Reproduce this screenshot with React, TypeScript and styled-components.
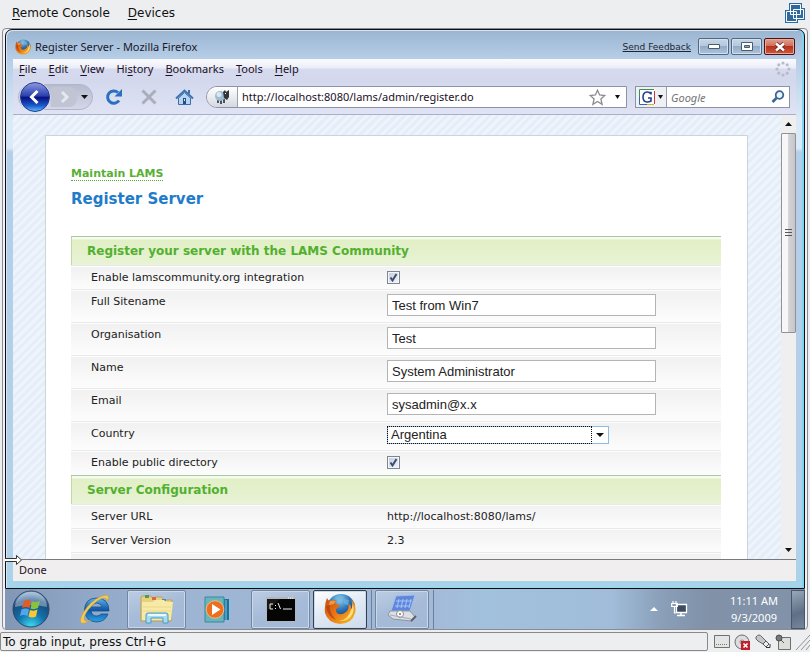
import React from "react";
import styled, { createGlobalStyle } from "styled-components";

const UI = '"Noto Sans", "Open Sans", sans-serif';
const DEJAVU = '"DejaVu Sans", sans-serif';

const Global = createGlobalStyle`
  * { box-sizing: border-box; }
  html, body { margin: 0; padding: 0; }
  body { background: #eceef0; color: #111; font-family: ${DEJAVU}; font-size: 12px; }
  button, input, select { font: inherit; color: inherit; margin: 0; padding: 0; border: 0; background: none; border-radius: 0; outline: none; }
  svg { display: block; flex: none; }
  u { text-underline-offset: 2px; }
`;

const Console = styled.div`
  display: flex;
  flex-direction: column;
  height: 100vh;
  min-height: 420px;
  overflow: hidden;
`;

const ConsoleMenu = styled.nav`
  display: flex;
  align-items: center;
  gap: 18px;
  flex: none;
  height: 28px;
  padding: 0 5px 2px 12px;
`;

const ConsoleItem = styled.button`
  font-size: 12px;
  line-height: 16px;
`;

const UnityButton = styled.button`
  margin-left: auto;
`;

const Screen = styled.main`
  display: flex;
  flex-direction: column;
  flex: 1;
  min-height: 0;
  margin: 0 2px 0 2px;
  padding: 0 2px;
  border: 1px solid #8c8c90;
  border-radius: 4px;
  background: #f2f0f4;
`;

const Window = styled.section`
  display: flex;
  flex-direction: column;
  flex: 1;
  min-height: 0;
  padding: 0 8px 7px 7px;
  border: 1px solid #0a0e14;
  border-radius: 7px 7px 0 0;
  background: linear-gradient(#9bb4d1 0, #b5cde6 28px, #dbeaf8 90px, #dbeaf8 118px, #b3cfe9 122px, #b5d0e9 92%, #a5d4ea);
  box-shadow: inset -2px 0 0 #7fd4ee, inset 1px 1px 0 #d5e5f2, inset 0 -2px 0 #9fd6ea;
`;

const TitleBar = styled.header`
  display: flex;
  align-items: center;
  flex: none;
  height: 29px;
  padding: 4px 3px 0 2px;
  gap: 4px;
  font-family: ${UI};
  font-size: 11px;
  color: #18182c;
`;

const Title = styled.h1`
  margin: 0;
  font: inherit;
  line-height: 16px;
`;

const Feedback = styled.a`
  margin-left: auto;
  margin-right: 3px;
  font-family: ${DEJAVU};
  font-size: 9px;
  color: #1d2630;
`;

const WinButton = styled.button<{ $close?: boolean }>`
  display: flex;
  align-items: center;
  justify-content: center;
  width: 31px;
  height: 17px;
  margin-right: -2px;
  border: 1px solid ${(p) => (p.$close ? "#4a1414" : "#53687f")};
  border-radius: 2px;
  background: ${(p) =>
    p.$close
      ? "linear-gradient(#e0a08f, #cf6c58 48%, #b8321c 50%, #cd5a3c)"
      : "linear-gradient(#c5d6e8, #b3c7dd 48%, #93abc6 50%, #adc4dc)"};
  box-shadow: inset 0 0 0 1px ${(p) => (p.$close ? "#e9a99b" : "#d3e1ef")};
`;

const MenuBar = styled.nav`
  display: flex;
  align-items: center;
  gap: 12px;
  flex: none;
  height: 21px;
  padding: 0 5px 2px 6px;
  background: linear-gradient(#fbfbfe, #eceef8 40%, #d5daee 50%, #d3d8ed);
  font-family: ${UI};
  font-size: 11px;
`;

const MenuItem = styled.button`
  line-height: 16px;
  color: #1c1026;
`;

const Throbber = styled.span`
  margin-left: auto;
`;

const Toolbar = styled.div`
  display: flex;
  align-items: center;
  flex: none;
  height: 35px;
  padding: 0 6px 0 5px;
  border-bottom: 1px solid #a9afc4;
  background: linear-gradient(#d3d8ed, #dfe3f4);
  font-family: ${UI};
  font-size: 11px;
`;

const NavPill = styled.div`
  display: flex;
  align-items: center;
  height: 26px;
  width: 75px;
  padding-right: 5px;
  border: 1px solid #b0b5c9;
  border-radius: 13px;
  background: linear-gradient(#b6bbcf, #d3d7e8);
`;

const IconButton = styled.button<{ $gap?: number }>`
  display: flex;
  align-items: center;
  justify-content: center;
  margin-left: ${(p) => p.$gap ?? 0}px;
`;

const AddressBox = styled.div`
  display: flex;
  align-items: center;
  flex: 1;
  height: 22px;
  margin-left: 12px;
  padding-right: 6px;
  border: 1px solid #8d93a6;
  border-radius: 12px 0 0 12px;
  background: #fff;
  overflow: hidden;
`;

const SiteIdentity = styled.button`
  display: flex;
  align-items: center;
  justify-content: center;
  width: 31px;
  height: 20px;
  border-right: 1px solid #9a9fb0;
  background: linear-gradient(#fff, #d6d8e0);
`;

const AddressInput = styled.input`
  flex: 1;
  min-width: 0;
  padding-left: 4px;
  line-height: 16px;
  color: #1c1026;
`;

const SearchBox = styled.div`
  display: flex;
  align-items: center;
  width: 155px;
  height: 22px;
  margin-left: 8px;
  padding-right: 4px;
  border: 1px solid #8d93a6;
  background: #fff;
`;

const Engine = styled.button`
  display: flex;
  align-items: center;
  gap: 3px;
  height: 20px;
  width: 31px;
  padding-left: 3px;
  border-right: 1px solid #9a9fb0;
  background: #eef0f4;
`;

const SearchInput = styled.input`
  flex: 1;
  min-width: 0;
  padding-left: 4px;
  font-style: italic;
  &::placeholder { color: #757575; opacity: 1; }
`;

const Viewport = styled.div`
  display: flex;
  flex: 1;
  min-height: 0;
  border-bottom: 1px solid #77797c;
`;

const Page = styled.div`
  flex: 1;
  min-width: 0;
  overflow: hidden;
  padding: 20px 33px 0 32px;
  background: repeating-linear-gradient(135deg, #e4edf8 0 3px, #eef4fb 3px 6px);
`;

const Card = styled.article`
  min-height: 100%;
  padding: 30px 26px 40px 25px;
  border: 1px solid #cbd3dc;
  background: #fff;
`;

const Crumb = styled.a`
  display: inline-block;
  border-bottom: 1px dotted #58a83c;
  font-size: 11px;
  font-weight: bold;
  line-height: 12px;
  color: #58b035;
  text-decoration: none;
`;

const Heading = styled.h2`
  margin: 8px 0 27px;
  font-size: 15px;
  line-height: 20px;
  color: #1f7cc9;
`;

const Settings = styled.table`
  width: 100%;
  border-collapse: collapse;
  table-layout: fixed;
  font-size: 11px;
  color: #222;
`;

const SectionHead = styled.th`
  height: 29px;
  padding: 0 0 1px 16px;
  border-top: 1px solid #a9c8a4;
  background: linear-gradient(#fff 0 1px, #e1efc6 2px, #e5f1cf 70%, #e9f4d8);
  box-shadow: inset 1px 0 0 #c3d6a9;
  font-size: 12px;
  line-height: 16px;
  text-align: left;
  color: #52b02f;
`;

const Row = styled.tr<{ $h: number }>`
  height: ${(p) => p.$h}px;
  background: linear-gradient(#f1f1f1, #fdfdfd);
  border-top: 1px solid #e9e9e9;
`;

const LabelCell = styled.th`
  padding: 5px 0 0 20px;
  font-weight: normal;
  line-height: 14px;
  text-align: left;
  vertical-align: top;
`;

const ValueCell = styled.td<{ $field?: boolean }>`
  padding: ${(p) => (p.$field ? 4 : 5)}px 0 0;
  line-height: 14px;
  vertical-align: top;
`;

const TextField = styled.input`
  display: block;
  width: 269px;
  height: 22px;
  padding: 1px 4px 0;
  border: 1px solid #b4b4b4;
  background: #fff;
  font-family: "Liberation Sans", sans-serif;
  font-size: 13px;
`;

const CheckField = styled.span`
  display: inline-grid;
  width: 13px;
  height: 13px;
  input {
    grid-area: 1 / 1;
    appearance: none;
    width: 13px;
    height: 13px;
    border: 1px solid #7d8794;
    background: linear-gradient(135deg, #c3cbd9, #f2f5f9);
    box-shadow: inset 0 0 0 1px #f4f6f8;
  }
  svg { grid-area: 1 / 1; pointer-events: none; visibility: hidden; }
  input:checked + svg { visibility: visible; }
`;

const SelectField = styled.span`
  display: flex;
  width: 222px;
  height: 18px;
  border: 1px solid #8fbbe0;
  background: #fff;
`;

const Select = styled.select`
  flex: 1;
  min-width: 0;
  margin: -1px 0 -1px -1px;
  padding-left: 3px;
  appearance: none;
  border: 1px dotted #111;
  font-family: "Liberation Sans", sans-serif;
  font-size: 13px;
  line-height: 16px;
`;

const SelectArrow = styled.span`
  display: flex;
  align-items: center;
  justify-content: center;
  width: 16px;
`;

const ScrollBar = styled.div`
  display: flex;
  flex-direction: column;
  flex: none;
  width: 15px;
  background: #f0eff0;
`;

const ScrollButton = styled.button`
  display: flex;
  align-items: center;
  justify-content: center;
  height: 18px;
`;

const ScrollThumb = styled.div`
  display: flex;
  align-items: center;
  justify-content: center;
  height: 45%;
  margin-bottom: auto;
  border: 1px solid #929294;
  border-radius: 1px;
  background: linear-gradient(90deg, #f7f7f7 0 45%, #d5d5d8 50%, #c6c6ca);
`;

const StatusBar = styled.footer`
  position: relative;
  flex: none;
  height: 21px;
  padding: 2px 6px;
  background: #f0eeee;
  font-family: ${UI};
  font-size: 11px;
  line-height: 16px;
  color: #1c1026;
`;

const Pointer = styled.span`
  position: absolute;
  left: -8px;
  top: -6px;
`;

const Taskbar = styled.nav`
  display: flex;
  align-items: center;
  flex: none;
  height: 40px;
  background: linear-gradient(90deg, #8297b6, #91a7c7 10%, #9eb4d3 22%, #a3b9d8 52%, #a2c1dd 60%, #a0bcd8 76%, #8a9fb9 82%, #8091a8 88%, #8192a9);
`;

const TaskButton = styled.button<{ $frame?: boolean; $active?: boolean; $w: number }>`
  display: flex;
  align-items: center;
  justify-content: center;
  width: ${(p) => p.$w}px;
  height: 39px;
  border: ${(p) => (p.$active ? "1px solid #33404f" : p.$frame ? "1px solid #7186a1" : "0")};
  border-radius: 2px;
  box-shadow: ${(p) => (p.$frame || p.$active ? "inset 0 0 0 1px #c9d8ea" : "none")};
  background: ${(p) =>
    p.$active
      ? "linear-gradient(160deg, #fff, #dfe8f3 50%, #cfdcec)"
      : p.$frame
        ? "linear-gradient(160deg, #bccde3, #a6bbd8 50%, #a3b8d5)"
        : "none"};
`;

const Launchers = styled.div`
  display: flex;
  gap: 6px;
`;

const RunningTasks = styled.div`
  display: flex;
  gap: 3px;
`;

const TaskStack = styled.div`
  display: flex;
  padding-right: 4px;
  border-right: 1px solid #6d809b;
`;

const Tray = styled.div`
  display: flex;
  align-items: center;
  gap: 13px;
  margin-left: auto;
`;

const Clock = styled.time`
  width: 74px;
  margin-left: 16px;
  font-family: ${UI};
  font-size: 11px;
  line-height: 17px;
  text-align: center;
  color: #fff;
`;

const ShowDesktop = styled.button`
  width: 14px;
  height: 39px;
  margin-left: -13px;
  border: 1px solid #46566b;
  background: linear-gradient(160deg, #98a7b9, #5e6f86 60%, #76879d);
`;

const ConsoleStatus = styled.footer`
  display: flex;
  align-items: center;
  gap: 4px;
  flex: none;
  height: 22px;
  padding-top: 1px;
`;

const Hint = styled.output`
  flex: 1;
  height: 19px;
  padding: 0 2px;
  margin-right: 2px;
  border: 1px solid #88898c;
  border-radius: 2px;
  font-size: 12px;
  line-height: 18px;
`;

const Caret = ({ up, fill = "#111", w = 7 }: { up?: boolean; fill?: string; w?: number }) => (
  <svg width={w} height="4" viewBox="0 0 8 4" preserveAspectRatio="none">
    <path d={up ? "M0 4L4 0L8 4Z" : "M0 0H8L4 4Z"} fill={fill} />
  </svg>
);

const Check = () => (
  <svg width="13" height="13">
    <path d="M3.5 6.5L5.5 9.5L9.5 3" fill="none" stroke="#3c4c78" strokeWidth="2" />
  </svg>
);

const FirefoxIcon = ({ size, id }: { size: number; id: string }) => (
  <svg width={size} height={size} viewBox="0 0 32 32">
    <defs>
      <radialGradient id={id + "g"} cx=".45" cy=".2" r=".8">
        <stop offset="0" stopColor="#8fd0f3" />
        <stop offset=".45" stopColor="#2f74b8" />
        <stop offset="1" stopColor="#0c2659" />
      </radialGradient>
      <linearGradient id={id + "f"} x1="0" y1="0" x2="1" y2="1">
        <stop offset="0" stopColor="#c94a12" />
        <stop offset=".5" stopColor="#ea7a16" />
        <stop offset="1" stopColor="#f5c02b" />
      </linearGradient>
    </defs>
    <circle cx="17" cy="15" r="14" fill={`url(#${id}g)`} />
    <path d="M11 4Q16 1 20 4L17 8L13 8ZM20 6L25 7L24 12L20 11Z" fill="#70b3dd" opacity=".7" />
    <path d="M3 5Q4 8 6 8Q9 6 13 8Q11 9 11 11L16 12Q16 14 13 15Q11 17 13 20Q17 23 22 19Q26 16 24 10Q28 13 27 17Q30 12 27 6Q33 12 31 20Q28 31 16 31Q4 30 1 20Q0 12 3 5Z" fill={`url(#${id}f)`} />
    <path d="M27 7Q31 13 29 20Q25 29 15 28Q24 27 27 17Q30 12 27 7Z" fill="#fbe07a" />
    <path d="M2 13Q3 23 12 27Q5 20 6 12Z" fill="#b23a10" opacity=".7" />
    <path d="M6 8Q9 7 12 8Q10 10 10 11L5 12Z" fill="#f19a3a" />
  </svg>
);

const UnityIcon = () => (
  <svg width="20" height="21" viewBox="0 0 20 21">
    <path d="M4 0H17V5H20V17H13V20H0V7H4Z" fill="#2d6b9f" />
    <g fill="none" stroke="#fff">
      <path d="M5.500 1.500H15.500V11.500H5.500Z" />
      <path d="M8.500 6.500H18.500V15.500H8.500Z" />
      <path d="M1.500 8.500H11.500V18.500H1.500Z" />
    </g>
  </svg>
);

const BackIcon = () => (
  <svg width="32" height="32" viewBox="0 0 32 32">
    <defs>
      <linearGradient id="bk" x1="0" y1="0" x2="0" y2="1">
        <stop offset="0" stopColor="#8d9be2" />
        <stop offset=".46" stopColor="#2b40ae" />
        <stop offset=".52" stopColor="#06127e" />
        <stop offset=".8" stopColor="#1d5bd0" />
        <stop offset="1" stopColor="#5ec4f8" />
      </linearGradient>
    </defs>
    <circle cx="16" cy="16" r="15.500" fill="#dfe5f5" />
    <circle cx="16" cy="16" r="14.500" fill="url(#bk)" stroke="#26388a" />
    <path d="M18.500 10L12.500 16L18.500 22" fill="none" stroke="#fff" strokeWidth="3" />
  </svg>
);

const ForwardIcon = () => (
  <svg width="26" height="20" viewBox="0 0 26 20">
    <path d="M0 0H19Q26 1 26 10Q26 19 19 20H0Z" fill="#c0c4d3" />
    <path d="M11 5L16 10L11 15" fill="none" stroke="#e6e8f0" strokeWidth="3" />
  </svg>
);

const ReloadIcon = () => (
  <svg width="18" height="18" viewBox="0 0 18 18">
    <path d="M14 12.500A6.200 6.200 0 1 1 13 4.500" fill="none" stroke="#2c6fc0" strokeWidth="3" />
    <path d="M17 1V8.500H9.500Z" fill="#2c6fc0" />
  </svg>
);

const StopIcon = () => (
  <svg width="16" height="16" viewBox="0 0 16 16">
    <path d="M1.500 1.500L14.500 14.500M14.500 1.500L1.500 14.500" stroke="#aaaeba" strokeWidth="3" />
  </svg>
);

const HomeIcon = () => (
  <svg width="19" height="17" viewBox="0 0 19 17">
    <path d="M3.500 9V15.500H15.500V9L9.500 3.500Z" fill="#b7d5f0" stroke="#3b6ea6" />
    <path d="M1 9.500L9.500 1.500L18 9.500" fill="none" stroke="#3b72b2" strokeWidth="2" />
    <path d="M13 1H15V5L13 4Z" fill="#3b6ea6" />
    <path d="M8 9H11V15H8Z" fill="#244f86" />
    <path d="M9 10H10V12H9Z" fill="#d8e8f8" />
  </svg>
);

const LambIcon = () => (
  <svg width="16" height="16" viewBox="0 0 16 16">
    <path d="M4 10V14M7 11V15M10 10V14" stroke="#39424a" strokeWidth="1.800" />
    <circle cx="6" cy="7" r="5" fill="#9ebbcf" />
    <circle cx="5" cy="5.500" r="2.500" fill="#d7e8f2" />
    <path d="M9 3L11 1L12 3L15 1V8L13 11L10 9Z" fill="#30363c" />
    <path d="M11 4H12V5H11Z" fill="#fff" />
  </svg>
);

const StarIcon = () => (
  <svg width="17" height="17" viewBox="0 0 17 17">
    <path d="M8.500 1.200L10.600 6L15.800 6.500L11.900 9.900L13.100 15.300L8.500 12.500L3.900 15.300L5.100 9.900L1.200 6.500L6.400 6Z" fill="#fff" stroke="#8b8c90" strokeWidth="1.300" />
  </svg>
);

const GoogleIcon = () => (
  <svg width="16" height="16" viewBox="0 0 16 16">
    <path d="M0 0H16V16H0Z" fill="#fff" />
    <path d="M.5 15V.5H15" fill="none" stroke="#3c8e51" />
    <path d="M.5 8V15.500H9" fill="none" stroke="#3465ad" />
    <path d="M15.500 2V15" stroke="#c63a35" />
    <path d="M8 15.500H15" stroke="#d8b02c" />
    <path d="M12 5.500V2.800M12 5Q10.500 2.800 8 3Q4 3.300 4 8Q4 12.800 8 13Q10.500 13 12 12V9H9" fill="none" stroke="#253e87" strokeWidth="1.600" />
  </svg>
);

const SearchIcon = () => (
  <svg width="14" height="14" viewBox="0 0 14 14">
    <circle cx="8.500" cy="5" r="3.800" fill="#edf4fb" stroke="#3a6596" strokeWidth="1.800" />
    <path d="M5.500 8L1.500 12" stroke="#3a6596" strokeWidth="2.600" />
  </svg>
);

const ThrobberIcon = () => (
  <svg width="16" height="16" viewBox="0 0 16 16" fill="#b9bbc6">
    {[[8, 2], [12.200, 3.800], [14, 8], [12.200, 12.200], [8, 14], [3.800, 12.200], [2, 8], [3.800, 3.800]].map(([x, y]) => (
      <circle key={`${x}-${y}`} cx={x} cy={y} r="1.600" />
    ))}
  </svg>
);

const PointerIcon = () => (
  <svg width="18" height="12" viewBox="0 0 18 12">
    <path d="M0 4.500H11V1.500L17 6L11 10.500V7.500H0Z" fill="#fff" />
    <path d="M0 4.500H11.500V1.500L16.500 6L11.500 10.500V7.500H0" fill="none" stroke="#333" />
  </svg>
);

const StartIcon = () => (
  <svg width="38" height="38" viewBox="0 0 38 38">
    <defs>
      <radialGradient id="orb" cx=".5" cy="1" r="1">
        <stop offset="0" stopColor="#3fe0f5" />
        <stop offset=".4" stopColor="#1272ac" />
        <stop offset=".75" stopColor="#1b4878" />
        <stop offset="1" stopColor="#9ec0db" />
      </radialGradient>
    </defs>
    <circle cx="19" cy="19" r="18" fill="url(#orb)" stroke="#2c4666" />
    <path d="M3 17A16 15 0 0 1 35 17Q19 13 3 17Z" fill="#dceaf5" opacity=".42" />
    <path d="M12 11Q15 9 19 11L17.500 18Q14 16 10 18Z" fill="#e65a24" />
    <path d="M20 11.500Q24 13 28 11L26 18Q22 20 18.500 18.500Z" fill="#8ac43f" />
    <path d="M9.500 19.500Q13.500 17.500 17 19.500L15.500 26Q11.500 24 8 26Z" fill="#52a7e8" />
    <path d="M18 20Q22 21.500 25.500 19.500L24 26.500Q20 28.500 16.500 26.500Z" fill="#fbc832" />
  </svg>
);

const IeIcon = () => (
  <svg width="34" height="32" viewBox="0 0 34 32">
    <defs>
      <linearGradient id="ie" x1="0" y1="0" x2="0" y2="1">
        <stop offset="0" stopColor="#5fb4e8" />
        <stop offset=".5" stopColor="#0f56a8" />
        <stop offset="1" stopColor="#2ba4e2" />
      </linearGradient>
    </defs>
    <path d="M31 18H13Q14 23 18.500 23Q21.500 23 23 21H30Q27 29 18 29Q7 28 6.500 17Q7 5.500 18 5Q31 5 31 18ZM13 14H24Q23 10 18.500 10Q14 10 13 14Z" fill="url(#ie)" stroke="#14508e" strokeWidth=".8" />
    <path d="M29 8Q34 0 24 3Q12 8 5 20Q-1 32 7 30Q10 29 13 27Q6 30 6 25Q8 17 19 8Q28 2 29 8Z" fill="#f4cb55" stroke="#c8942b" strokeWidth=".5" />
  </svg>
);

const FolderIcon = () => (
  <svg width="34" height="32" viewBox="0 0 34 32">
    <path d="M1 5Q1 3 3 3H11L13 6H15V4H22L24 7H32L31 28H1Z" fill="#e8d17c" stroke="#b99c4a" strokeWidth=".8" />
    <path d="M5 2H9V5H5Z" fill="#4f9c52" />
    <path d="M12 4H16V7H12Z" fill="#d9674a" />
    <path d="M22 6H26V8H22Z" fill="#4a89bf" />
    <path d="M2 9H13L15 7H24L26 9H33L31 27H2Z" fill="#f7e9a6" />
    <path d="M3 14H31M3 18H31" stroke="#ead78a" />
    <path d="M6 30V22Q6 20 8 20H26Q28 20 28 22V30H23V25H11V30Z" fill="#a6dbf2" stroke="#4a9cc6" />
    <path d="M8 22H26" stroke="#e8f8ff" strokeWidth="2" />
  </svg>
);

const MediaIcon = () => (
  <svg width="29" height="27" viewBox="0 0 29 27">
    <path d="M19 3H25V24H19Z" fill="#1f6f9e" />
    <path d="M22 4V24M25.500 5V23" stroke="#85c7e2" />
    <path d="M1 1H20V26H1Z" fill="#68b6bd" stroke="#39889b" />
    <circle cx="11" cy="13.500" r="8.800" fill="#ec6f20" stroke="#f8b785" />
    <path d="M8 8L16.500 13.500L8 19Z" fill="#fff" />
  </svg>
);

const CmdIcon = () => (
  <svg width="30" height="25" viewBox="0 0 30 25">
    <path d="M0 0H30V25H0Z" fill="#b3b6bc" />
    <path d="M1 2H29V24H1Z" fill="#050505" />
    <path d="M22 1H28" stroke="#fff" strokeDasharray="1 1" />
    <path d="M7 7H4V12H7M9.500 8V9M9.500 11V12M12 6L14.500 12M17 12H26" fill="none" stroke="#f0f0f0" />
    <path d="M1 14L14 2H1Z" fill="#fff" opacity=".08" />
  </svg>
);

const InstallerIcon = () => (
  <svg width="30" height="30" viewBox="0 0 30 30">
    <path d="M9 2L28 1L23 17L4 17Z" fill="#5d86dd" stroke="#a4bcec" />
    <path d="M12 5L10 14M16 5L14 14M20 5L18 14M24 5L22 14M9 7H25M8 12H23" stroke="#a9c4f5" />
    <path d="M3 17H23L28 23L25 27L6 25L1 21Z" fill="#dcdfe3" stroke="#82868e" strokeWidth=".8" />
    <path d="M24 27L29 22" stroke="#5a6068" strokeWidth="2" />
    <circle cx="13" cy="20" r="3.500" fill="#fafafa" stroke="#8c9096" />
    <path d="M3 21L24 25" stroke="#a8abb1" />
    <circle cx="13" cy="20" r="1" fill="#777" />
  </svg>
);

const NetworkIcon = () => (
  <svg width="17" height="17" viewBox="0 0 17 17">
    <path d="M5.500 3.500H15.500V11.500H5.500Z" fill="#3d4c5e" stroke="#fff" strokeWidth="1.300" />
    <path d="M6 14.500H14M10 12V14" stroke="#fff" strokeWidth="1.500" />
    <path d="M2 0V3M5 0V3M0.700 2.500H6.300V5.500H.7ZM3.500 6V12H5" fill="none" stroke="#fff" strokeWidth="1.200" />
  </svg>
);

const KeyboardIcon = () => (
  <svg width="16" height="15" viewBox="0 0 16 15">
    <path d="M.5 1.500H15.500V13.500H.5Z" fill="#e4e4e2" stroke="#6f7072" />
    <path d="M2 10.500H14" stroke="#77787a" strokeDasharray="1 1" />
  </svg>
);

const DiscIcon = () => (
  <svg width="17" height="16" viewBox="0 0 17 16">
    <circle cx="8" cy="8" r="7" fill="#dcdcdc" stroke="#6c6c6c" />
    <circle cx="8" cy="8" r="2" fill="#fff" stroke="#888" />
    <path d="M7 7H16V16H7Z" fill="#c0202c" />
    <path d="M9.500 9.500L13.500 13.500M13.500 9.500L9.500 13.500" stroke="#fff" strokeWidth="1.600" />
  </svg>
);

const PlugIcon = () => (
  <svg width="16" height="15" viewBox="0 0 16 15">
    <path d="M1 3Q4 -1 7 3L11 7L8 10L3 7Q0 5 1 3Z" fill="#c6c6c4" stroke="#666" />
    <path d="M11 7L14 10L11 13L8 10Z" fill="#eee" stroke="#555" />
    <path d="M11 13.500H15V10" fill="none" stroke="#333" />
  </svg>
);

const PinIcon = () => (
  <svg width="17" height="16" viewBox="0 0 17 16">
    <path d="M3.500 3.500H15.500V15.500H3.500Z" fill="#dcded9" stroke="#6d6e6c" />
    <circle cx="4" cy="4" r="3" fill="#777a7b" stroke="#4c4e4f" />
    <path d="M6 6L9 9" stroke="#555" />
  </svg>
);

const GripIcon = () => (
  <svg width="14" height="16" viewBox="0 0 14 16">
    <path d="M0 16L14 1M5 16L14 6M10 16L14 11" stroke="#909194" />
  </svg>
);

const menus = [["F", "ile"], ["E", "dit"], ["V", "iew"], ["Hi", "story"], ["B", "ookmarks"], ["T", "ools"], ["H", "elp"]];

const fields = [
  { id: "sitename", label: "Full Sitename", value: "Test from Win7" },
  { id: "organisation", label: "Organisation", value: "Test" },
  { id: "name", label: "Name", value: "System Administrator" },
  { id: "email", label: "Email", value: "sysadmin@x.x" },
];

const server = [["Server URL", "http://localhost:8080/lams/"], ["Server Version", "2.3"]];

function CheckRow({ id, label, h }: { id: string; label: string; h: number }) {
  return (
    <Row $h={h}>
      <LabelCell scope="row"><label htmlFor={id}>{label}</label></LabelCell>
      <ValueCell>
        <CheckField>
          <input id={id} type="checkbox" defaultChecked />
          <Check />
        </CheckField>
      </ValueCell>
    </Row>
  );
}

const LabelCol = styled.col`
  width: 316px;
`;

function RegisterForm() {
  return (
    <Settings>
      <colgroup>
        <LabelCol />
        <col />
      </colgroup>
      <tbody>
        <tr><SectionHead colSpan={2}>Register your server with the LAMS Community</SectionHead></tr>
        <CheckRow id="integration" label="Enable lamscommunity.org integration" h={24} />
        {fields.map((f) => (
          <Row $h={33} key={f.id}>
            <LabelCell scope="row"><label htmlFor={f.id}>{f.label}</label></LabelCell>
            <ValueCell $field><TextField id={f.id} defaultValue={f.value} /></ValueCell>
          </Row>
        ))}
        <Row $h={29}>
          <LabelCell scope="row"><label htmlFor="country">Country</label></LabelCell>
          <ValueCell $field>
            <SelectField>
              <Select id="country" defaultValue="Argentina">
                <option>Argentina</option>
              </Select>
              <SelectArrow><Caret w={8} /></SelectArrow>
            </SelectField>
          </ValueCell>
        </Row>
        <CheckRow id="directory" label="Enable public directory" h={25} />
        <tr><SectionHead colSpan={2}>Server Configuration</SectionHead></tr>
        {server.map(([label, value]) => (
          <Row $h={24} key={label}>
            <LabelCell scope="row">{label}</LabelCell>
            <ValueCell>{value}</ValueCell>
          </Row>
        ))}
        <Row $h={24}>
          <LabelCell scope="row" />
          <ValueCell />
        </Row>
      </tbody>
    </Settings>
  );
}

export default function App() {
  return (
    <Console>
      <Global />
      <ConsoleMenu>
        <ConsoleItem><u>R</u>emote Console</ConsoleItem>
        <ConsoleItem><u>D</u>evices</ConsoleItem>
        <UnityButton aria-label="Unity"><UnityIcon /></UnityButton>
      </ConsoleMenu>
      <Screen>
        <Window>
          <TitleBar>
            <FirefoxIcon size={16} id="t" />
            <Title>Register Server - Mozilla Firefox</Title>
            <Feedback href="#feedback">Send Feedback</Feedback>
            <WinButton aria-label="Minimize">
              <svg width="12" height="5"><path d="M.5 .5H11.500V4.500H.5Z" fill="#fff" stroke="#4c5c70" /></svg>
            </WinButton>
            <WinButton aria-label="Maximize">
              <svg width="12" height="9"><path d="M.5 .5H11.500V8.500H.5Z" fill="#fff" stroke="#4c5c70" /><path d="M3.500 3.500H8.500V5.500H3.500Z" fill="#8ba4c0" stroke="#4c5c70" /></svg>
            </WinButton>
            <WinButton $close aria-label="Close">
              <svg width="12" height="10"><path d="M2 1.500L10 8.500M10 1.500L2 8.500" stroke="#5b2a2a" strokeWidth="4" /><path d="M2 1.500L10 8.500M10 1.500L2 8.500" stroke="#fff" strokeWidth="2.400" /></svg>
            </WinButton>
          </TitleBar>
          <MenuBar>
            {menus.map(([a, b]) => (
              <MenuItem key={a + b}>
                {a === "Hi" ? <>Hi<u>s</u>tory</> : <><u>{a}</u>{b}</>}
              </MenuItem>
            ))}
            <Throbber><ThrobberIcon /></Throbber>
          </MenuBar>
          <Toolbar>
            <NavPill>
              <IconButton aria-label="Back"><BackIcon /></IconButton>
              <IconButton aria-label="Forward"><ForwardIcon /></IconButton>
              <IconButton aria-label="Recent pages" $gap={4}><Caret /></IconButton>
            </NavPill>
            <IconButton aria-label="Reload" $gap={12}><ReloadIcon /></IconButton>
            <IconButton aria-label="Stop" $gap={18}><StopIcon /></IconButton>
            <IconButton aria-label="Home" $gap={18}><HomeIcon /></IconButton>
            <AddressBox>
              <SiteIdentity aria-label="Site identity"><LambIcon /></SiteIdentity>
              <AddressInput aria-label="Address" defaultValue="http://localhost:8080/lams/admin/register.do" />
              <IconButton aria-label="Bookmark"><StarIcon /></IconButton>
              <IconButton aria-label="History" $gap={9}><Caret w={5} /></IconButton>
            </AddressBox>
            <SearchBox>
              <Engine aria-label="Search engine"><GoogleIcon /><Caret w={5} /></Engine>
              <SearchInput aria-label="Search" placeholder="Google" />
              <IconButton aria-label="Search"><SearchIcon /></IconButton>
            </SearchBox>
          </Toolbar>
          <Viewport>
            <Page>
              <Card>
                <Crumb href="#maintain">Maintain LAMS</Crumb>
                <Heading>Register Server</Heading>
                <RegisterForm />
              </Card>
            </Page>
            <ScrollBar>
              <ScrollButton aria-label="Scroll up"><Caret up /></ScrollButton>
              <ScrollThumb>
                <svg width="7" height="8"><path d="M0 .5H7M0 3.500H7M0 6.500H7" stroke="#55575c" /></svg>
              </ScrollThumb>
              <ScrollButton aria-label="Scroll down"><Caret /></ScrollButton>
            </ScrollBar>
          </Viewport>
          <StatusBar>
            Done
            <Pointer><PointerIcon /></Pointer>
          </StatusBar>
        </Window>
        <Taskbar>
          <Launchers>
            <TaskButton $w={52} aria-label="Start"><StartIcon /></TaskButton>
            <TaskButton $w={64} aria-label="Internet Explorer"><IeIcon /></TaskButton>
          </Launchers>
          <TaskButton $w={59} $frame aria-label="Explorer"><FolderIcon /></TaskButton>
          <TaskButton $w={65} aria-label="Media Player"><MediaIcon /></TaskButton>
          <RunningTasks>
            <TaskButton $w={59} $frame aria-label="Command Prompt"><CmdIcon /></TaskButton>
            <TaskStack>
              <TaskButton $w={54} $active aria-label="Firefox"><FirefoxIcon size={32} id="b" /></TaskButton>
            </TaskStack>
            <TaskStack>
              <TaskButton $w={54} $frame aria-label="Installer"><InstallerIcon /></TaskButton>
            </TaskStack>
          </RunningTasks>
          <Tray>
            <Caret up w={8} fill="#fff" />
            <NetworkIcon />
            <Clock>11:11 AM<br />9/3/2009</Clock>
            <ShowDesktop aria-label="Show desktop" />
          </Tray>
        </Taskbar>
      </Screen>
      <ConsoleStatus>
        <Hint>To grab input, press Ctrl+G</Hint>
        <KeyboardIcon />
        <DiscIcon />
        <PlugIcon />
        <PinIcon />
        <GripIcon />
      </ConsoleStatus>
    </Console>
  );
}
